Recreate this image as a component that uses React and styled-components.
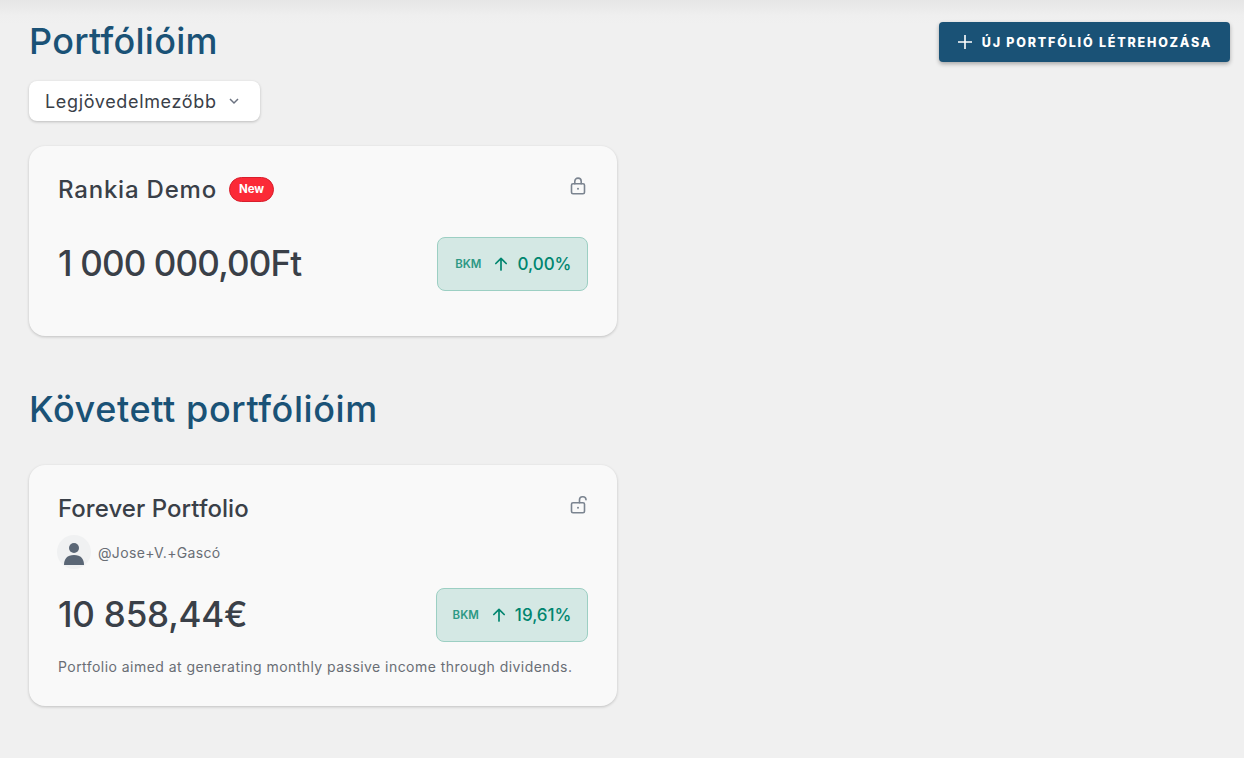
import React from "react";
import styled, { createGlobalStyle } from "styled-components";

const Global = createGlobalStyle`
  html, body { margin: 0; padding: 0; }
  body { background: #f0f0f0; font-family: Inter, "Noto Sans", sans-serif; }
`;

const Page = styled.div`
  box-sizing: border-box;
  height: 758px;
  overflow: hidden;
  padding: 22px 14px 0 29px;
  background: linear-gradient(#e6e6e6 0, #efefef 16px, #f0f0f0 24px);
`;

const Header = styled.div`
  display: flex;
  justify-content: space-between;
  align-items: flex-start;
  height: 59px;
`;

const Title = styled.h1`
  margin: 0;
  font-size: 36px;
  line-height: 38px;
  font-weight: 500;
  letter-spacing: 0.27px;
  color: #1a5276;
`;

const SectionTitle = styled(Title)`
  margin: 54px 0 37px;
  letter-spacing: 0.6px;
`;

const PrimaryButton = styled.button`
  display: flex;
  align-items: center;
  justify-content: center;
  gap: 9px;
  width: 291px;
  height: 40px;
  padding: 0;
  border: 0;
  border-radius: 4px;
  background: #1a5276;
  color: #fff;
  font: 800 12.5px Inter, sans-serif;
  letter-spacing: 1.8px;
  box-shadow: 0 2px 4px rgba(0, 0, 0, 0.3);
`;

const Select = styled.div`
  box-sizing: border-box;
  display: flex;
  align-items: center;
  width: 231px;
  height: 40px;
  padding-left: 16px;
  gap: 11px;
  background: #fff;
  border-radius: 8px;
  font-size: 18px;
  letter-spacing: 0.65px;
  color: #3a4048;
  box-shadow: 0 1px 3px rgba(0, 0, 0, 0.22);
`;

const Card = styled.section`
  box-sizing: border-box;
  width: 588px;
  height: ${(p) => p.$height}px;
  margin-top: ${(p) => p.$offset || 0}px;
  padding: 29px 29px 0;
  background: #f9f9f9;
  border-radius: 16px;
  box-shadow: 0 1px 3px rgba(0, 0, 0, 0.2);
`;

const CardHead = styled.div`
  display: flex;
  align-items: center;
  justify-content: space-between;
  height: 28px;
`;

const NameWrap = styled.div`
  display: flex;
  align-items: center;
  gap: 12px;
`;

const Name = styled.h2`
  margin: 0;
  font-size: 24px;
  font-weight: 500;
  letter-spacing: ${(p) => p.$tracking}px;
  color: #3a4048;
`;

const NewBadge = styled.span`
  box-sizing: border-box;
  display: flex;
  align-items: center;
  justify-content: center;
  width: 45px;
  height: 25px;
  border: 1px solid #d81e2c;
  border-radius: 13px;
  background: #fb2a37;
  color: #fff;
  font-size: 11.5px;
  font-weight: 700;
`;

const ValueRow = styled.div`
  display: flex;
  align-items: center;
  justify-content: space-between;
  margin-top: ${(p) => p.$gap}px;
`;

const Amount = styled.div`
  padding-bottom: 2px;
  font-size: 35px;
  font-weight: 500;
  letter-spacing: ${(p) => p.$tracking}px;
  color: #3a4048;
`;

const Gain = styled.div`
  box-sizing: border-box;
  display: flex;
  align-items: center;
  justify-content: flex-end;
  width: ${(p) => p.$width}px;
  height: 54px;
  padding-right: 15.5px;
  border: 1px solid #9ccfc3;
  border-radius: 8px;
  background: #d4e8e4;
  color: #00856f;
`;

const Benchmark = styled.span`
  font-size: 11.5px;
  font-weight: 600;
  color: #2d9985;
`;

const Arrow = styled.svg`
  margin: 0 8px 0 12px;
`;

const GainValue = styled.span`
  font-size: 17px;
  font-weight: 500;
`;

const UserRow = styled.div`
  display: flex;
  align-items: center;
  gap: 7px;
  margin-top: 13px;
  margin-left: -1px;
  font-size: 14px;
  letter-spacing: 0.35px;
  color: #696e75;
`;

const Avatar = styled.div`
  width: 34px;
  height: 34px;
  border-radius: 50%;
  background: #f0f1f2;
  overflow: hidden;
`;

const Description = styled.p`
  margin: 15px 0 0;
  font-size: 14px;
  line-height: 20px;
  letter-spacing: 0.45px;
  color: #696e75;
`;

const Icon = styled.svg`
  display: block;
  flex: none;
`;

const LockIcon = styled(Icon)`
  margin-bottom: 6px;
  margin-right: 1px;
`;

const Lock = ({ open }) => (
  <LockIcon width="17" height="18" viewBox="0 0 17 18" fill="none" stroke="#7b8490" strokeWidth="1.6" strokeLinecap="round" strokeLinejoin="round">
    <rect x="1.5" y="6.8" width="13" height="10" rx="1.5" />
    {open ? (
      <path d="M9.5 6.8V3.8a3 3 0 0 1 3-3h.5a3 3 0 0 1 3 2.8" />
    ) : (
      <path d="M4.8 6.8V4.3a3.2 3.2 0 0 1 6.4 0v2.5" />
    )}
    <circle cx="8" cy="11.8" r="1" fill="#7b8490" stroke="none" />
  </LockIcon>
);

const UpArrow = () => (
  <Arrow width="16" height="16" viewBox="0 0 16 16" fill="none" stroke="#00856f" strokeWidth="1.7" strokeLinecap="round" strokeLinejoin="round">
    <path d="M8 14V2.5M2.8 7.5 8 2.3l5.2 5.2" />
  </Arrow>
);

const GainBox = ({ value, width }) => (
  <Gain $width={width}>
    <Benchmark>BKM</Benchmark>
    <UpArrow />
    <GainValue>{value}</GainValue>
  </Gain>
);

export default function App() {
  return (
    <Page>
      <Global />
      <Header>
        <Title>Portfólióim</Title>
        <PrimaryButton>
          <Icon width="16" height="16" viewBox="0 0 16 16" stroke="#fff" strokeWidth="1.6">
            <path d="M8 1v14M1 8h14" />
          </Icon>
          ÚJ PORTFÓLIÓ LÉTREHOZÁSA
        </PrimaryButton>
      </Header>
      <Select>
        Legjövedelmezőbb
        <Icon width="12" height="12" viewBox="0 0 12 12" fill="none" stroke="#6b7280" strokeWidth="1.5">
          <path d="M2 4l4 4 4-4" />
        </Icon>
      </Select>
      <Card $height={190} $offset={25}>
        <CardHead>
          <NameWrap>
            <Name $tracking={0.8}>Rankia Demo</Name>
            <NewBadge>New</NewBadge>
          </NameWrap>
          <Lock />
        </CardHead>
        <ValueRow $gap={34}>
          <Amount $tracking={-0.85}>1 000 000,00Ft</Amount>
          <GainBox value="0,00%" width={151} />
        </ValueRow>
      </Card>
      <SectionTitle as="h2">Követett portfólióim</SectionTitle>
      <Card $height={241}>
        <CardHead>
          <Name $tracking={0.05}>Forever Portfolio</Name>
          <Lock open />
        </CardHead>
        <UserRow>
          <Avatar>
            <Icon width="34" height="34" viewBox="0 0 34 34" fill="#5a6675">
              <circle cx="17" cy="13" r="5" />
              <path d="M7 30c0-6 3-10 10-10s10 4 10 10z" />
            </Icon>
          </Avatar>
          @Jose+V.+Gascó
        </UserRow>
        <ValueRow $gap={19}>
          <Amount $tracking={-0.2}>10 858,44€</Amount>
          <GainBox value="19,61%" width={152} />
        </ValueRow>
        <Description>Portfolio aimed at generating monthly passive income through dividends.</Description>
      </Card>
    </Page>
  );
}
